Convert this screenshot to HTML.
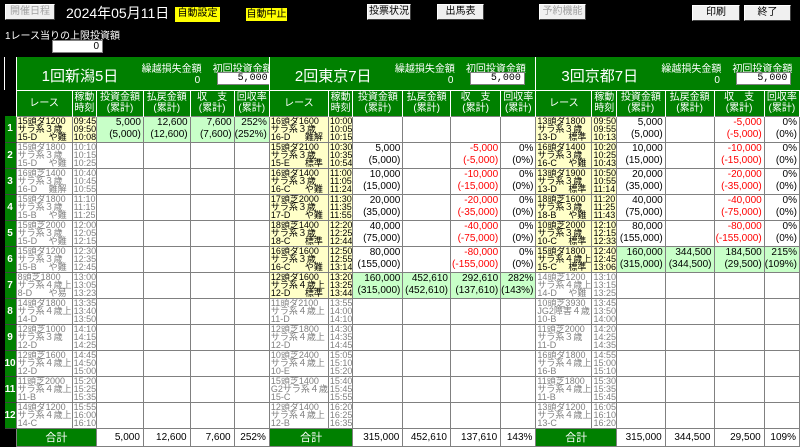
<!DOCTYPE html>
<html><head><meta charset="utf-8"><style>
*{box-sizing:border-box;margin:0;padding:0}
body{width:800px;height:446px;background:#000;position:relative;overflow:hidden;font-family:"Liberation Sans","Noto Sans CJK JP",sans-serif;color:#000}
.btn{position:absolute;height:16px;background:#f0f0f0;border:1px solid;border-color:#fff #404040 #404040 #fff;font-size:10px;line-height:14px;text-align:center}
.dis{color:#a0a0a0}
.yel{position:absolute;background:#ffff00;font-size:10px;line-height:14px;text-align:center;height:15px}
table{position:absolute;left:4px;top:57px;border-collapse:collapse;table-layout:fixed}
td,th{padding:0;overflow:hidden;white-space:nowrap}
tr.ttl{height:33px}tr.hd{height:26px}tr.d{height:26px}tr.tot{height:18px}
.gr{background:#008000;color:#fff;font-weight:normal}
.hd th{font-size:10px;line-height:11px;border:1px solid #fff;border-bottom:none}
.ttl th{position:relative;border-left:1px solid #fff}
.ttl .tn{position:absolute;left:25px;top:8px;font-size:15px}
.ttl .kl{position:absolute;left:125px;top:3px;font-size:10px}
.ttl .k0{position:absolute;left:178px;top:18px;font-size:10px}
.ttl .sl{position:absolute;left:196px;top:3px;font-size:10px}
.ttl .in{position:absolute;left:200px;top:15px;width:55px;height:13px;background:#fff;color:#000;border:1px solid #808080;font-size:10px;line-height:11px;text-align:right;padding-right:3px;font-family:"Liberation Mono",monospace}
th.n{background:#008000;color:#fff;font-size:10px;border-bottom:1px solid #404040}
th.nb{background:#000}
td{border:1px solid #808080;background:#fff;vertical-align:middle}
td.r{font-size:9px;line-height:8.3px;color:#808080;padding-left:1px}
td.r s{text-decoration:none;float:right;padding-right:5px}
td.t{font-size:9px;line-height:8.3px;color:#808080;padding-left:1px}
td.a{background:#ffffc8;color:#000}
td.m{font-size:10px;line-height:12px;text-align:right;padding-right:2px}
td.g{background:#c8ffc8}
td.rd{color:#f00}
.tot td{font-size:10px;text-align:right;padding-right:3px}
.tot th{border:1px solid #808080}
</style></head><body>
<div class="btn dis" style="left:5px;top:4px;width:50px">開催日程</div>
<div style="position:absolute;left:66px;top:3px;color:#fff;font-size:14px">2024年05月11日</div>
<div class="yel" style="left:175px;top:7px;width:45px">自動設定</div>
<div class="yel" style="left:245px;top:7px;width:43px;border:1px solid #000;line-height:13px">自動中止</div>
<div class="btn" style="left:367px;top:4px;width:44px">投票状況</div>
<div class="btn" style="left:437px;top:4px;width:47px">出馬表</div>
<div class="btn dis" style="left:539px;top:4px;width:47px">予約機能</div>
<div class="btn" style="left:692px;top:5px;width:48px">印刷</div>
<div class="btn" style="left:744px;top:5px;width:47px">終了</div>
<div style="position:absolute;left:5px;top:27px;color:#fff;font-size:10px">1レース当りの上限投資額</div>
<div style="position:absolute;left:52px;top:40px;width:51px;height:13px;background:#fff;border:1px solid #808080;font-size:10px;line-height:11px;text-align:right;padding-right:3px">0</div>

<table>
<colgroup><col style="width:11px">
<col style="width:52px"><col style="width:23px"><col style="width:51px"><col style="width:51px"><col style="width:51px"><col style="width:33px">
<col style="width:53px"><col style="width:21px"><col style="width:53px"><col style="width:49px"><col style="width:51px"><col style="width:33px">
<col style="width:52px"><col style="width:24px"><col style="width:51px"><col style="width:51px"><col style="width:51px"><col style="width:32px">
</colgroup>
<tr class="ttl"><th class="nb"></th>
<th colspan="6" class="gr"><span class="tn">1回新潟5日</span><span class="kl">繰越損失金額</span><span class="k0">0</span><span class="sl">初回投資金額</span><span class="in">5,000</span></th>
<th colspan="6" class="gr"><span class="tn">2回東京7日</span><span class="kl">繰越損失金額</span><span class="k0">0</span><span class="sl">初回投資金額</span><span class="in">5,000</span></th>
<th colspan="6" class="gr"><span class="tn">3回京都7日</span><span class="kl">繰越損失金額</span><span class="k0">0</span><span class="sl">初回投資金額</span><span class="in">5,000</span></th></tr>
<tr class="hd"><th class="nb" style="border:none"></th>
<th class="gr">レース</th><th class="gr">稼動<br>時刻</th><th class="gr">投資金額<br>(累計)</th><th class="gr">払戻金額<br>(累計)</th><th class="gr">収　支<br>(累計)</th><th class="gr">回収率<br>(累計)</th>
<th class="gr">レース</th><th class="gr">稼動<br>時刻</th><th class="gr">投資金額<br>(累計)</th><th class="gr">払戻金額<br>(累計)</th><th class="gr">収　支<br>(累計)</th><th class="gr">回収率<br>(累計)</th>
<th class="gr">レース</th><th class="gr">稼動<br>時刻</th><th class="gr">投資金額<br>(累計)</th><th class="gr">払戻金額<br>(累計)</th><th class="gr">収　支<br>(累計)</th><th class="gr">回収率<br>(累計)</th></tr>

<tr class="d"><th class="n">1</th>
<td class="r a">15頭ダ1200<br>サラ系３歳<br>15-D<s>や難</s></td><td class="t a">09:45<br>09:50<br>10:08</td><td class="m g">5,000<br>(5,000)</td><td class="m g">12,600<br>(12,600)</td><td class="m g">7,600<br>(7,600)</td><td class="m g">252%<br>(252%)</td>
<td class="r a">16頭ダ1600<br>サラ系３歳<br>16-D<s>難解</s></td><td class="t a">10:00<br>10:05<br>10:15</td><td></td><td></td><td></td><td></td>
<td class="r a">13頭ダ1800<br>サラ系３歳<br>13-D<s>標準</s></td><td class="t a">09:50<br>09:55<br>10:13</td><td class="m">5,000<br>(5,000)</td><td></td><td class="m rd">-5,000<br>(-5,000)</td><td class="m">0%<br>(0%)</td></tr>

<tr class="d"><th class="n">2</th>
<td class="r">15頭ダ1800<br>サラ系３歳<br>15-D<s>や難</s></td><td class="t">10:10<br>10:15<br>10:25</td><td></td><td></td><td></td><td></td>
<td class="r a">15頭ダ2100<br>サラ系３歳<br>15-E<s>標準</s></td><td class="t a">10:30<br>10:35<br>10:54</td><td class="m">5,000<br>(5,000)</td><td></td><td class="m rd">-5,000<br>(-5,000)</td><td class="m">0%<br>(0%)</td>
<td class="r a">16頭ダ1400<br>サラ系３歳<br>16-C<s>や難</s></td><td class="t a">10:20<br>10:25<br>10:43</td><td class="m">10,000<br>(15,000)</td><td></td><td class="m rd">-10,000<br>(-15,000)</td><td class="m">0%<br>(0%)</td></tr>

<tr class="d"><th class="n">3</th>
<td class="r">16頭芝1400<br>サラ系３歳<br>16-D<s>難解</s></td><td class="t">10:40<br>10:45<br>10:55</td><td></td><td></td><td></td><td></td>
<td class="r a">16頭ダ1400<br>サラ系３歳<br>16-C<s>や難</s></td><td class="t a">11:00<br>11:05<br>11:24</td><td class="m">10,000<br>(15,000)</td><td></td><td class="m rd">-10,000<br>(-15,000)</td><td class="m">0%<br>(0%)</td>
<td class="r a">13頭ダ1900<br>サラ系３歳<br>13-D<s>標準</s></td><td class="t a">10:50<br>10:55<br>11:14</td><td class="m">20,000<br>(35,000)</td><td></td><td class="m rd">-20,000<br>(-35,000)</td><td class="m">0%<br>(0%)</td></tr>

<tr class="d"><th class="n">4</th>
<td class="r">15頭ダ1800<br>サラ系３歳<br>15-B<s>や難</s></td><td class="t">11:10<br>11:15<br>11:25</td><td></td><td></td><td></td><td></td>
<td class="r a">17頭芝2000<br>サラ系３歳<br>17-D<s>や難</s></td><td class="t a">11:30<br>11:35<br>11:55</td><td class="m">20,000<br>(35,000)</td><td></td><td class="m rd">-20,000<br>(-35,000)</td><td class="m">0%<br>(0%)</td>
<td class="r a">18頭芝1600<br>サラ系３歳<br>18-B<s>や難</s></td><td class="t a">11:20<br>11:25<br>11:43</td><td class="m">40,000<br>(75,000)</td><td></td><td class="m rd">-40,000<br>(-75,000)</td><td class="m">0%<br>(0%)</td></tr>

<tr class="d"><th class="n">5</th>
<td class="r">15頭芝2000<br>サラ系３歳<br>15-D<s>や難</s></td><td class="t">12:00<br>12:05<br>12:15</td><td></td><td></td><td></td><td></td>
<td class="r a">18頭芝1400<br>サラ系３歳<br>18-C<s>標準</s></td><td class="t a">12:20<br>12:25<br>12:44</td><td class="m">40,000<br>(75,000)</td><td></td><td class="m rd">-40,000<br>(-75,000)</td><td class="m">0%<br>(0%)</td>
<td class="r a">10頭芝2000<br>サラ系３歳<br>10-C<s>標準</s></td><td class="t a">12:10<br>12:15<br>12:33</td><td class="m">80,000<br>(155,000)</td><td></td><td class="m rd">-80,000<br>(-155,000)</td><td class="m">0%<br>(0%)</td></tr>

<tr class="d"><th class="n">6</th>
<td class="r">15頭ダ1200<br>サラ系３歳<br>15-B<s>や難</s></td><td class="t">12:30<br>12:35<br>12:45</td><td></td><td></td><td></td><td></td>
<td class="r a">16頭ダ1600<br>サラ系３歳<br>16-C<s>や難</s></td><td class="t a">12:50<br>12:55<br>13:14</td><td class="m">80,000<br>(155,000)</td><td></td><td class="m rd">-80,000<br>(-155,000)</td><td class="m">0%<br>(0%)</td>
<td class="r a">15頭ダ1800<br>サラ系４歳上<br>15-C<s>標準</s></td><td class="t a">12:40<br>12:45<br>13:06</td><td class="m g">160,000<br>(315,000)</td><td class="m g">344,500<br>(344,500)</td><td class="m g">184,500<br>(29,500)</td><td class="m g">215%<br>(109%)</td></tr>

<tr class="d"><th class="n">7</th>
<td class="r">8頭芝1800<br>サラ系４歳上<br>8-D<s>や易</s></td><td class="t">13:00<br>13:05<br>13:23</td><td></td><td></td><td></td><td></td>
<td class="r a">12頭ダ1600<br>サラ系４歳上<br>12-D<s>標準</s></td><td class="t a">13:20<br>13:25<br>13:44</td><td class="m g">160,000<br>(315,000)</td><td class="m g">452,610<br>(452,610)</td><td class="m g">292,610<br>(137,610)</td><td class="m g">282%<br>(143%)</td>
<td class="r">14頭芝1200<br>サラ系４歳上<br>14-D<s>や難</s></td><td class="t">13:10<br>13:15<br>13:25</td><td></td><td></td><td></td><td></td></tr>

<tr class="d"><th class="n">8</th>
<td class="r">14頭ダ1800<br>サラ系４歳上<br>14-D</td><td class="t">13:35<br>13:40<br>13:50</td><td></td><td></td><td></td><td></td>
<td class="r">11頭ダ2100<br>サラ系４歳上<br>11-D</td><td class="t">13:55<br>14:00<br>14:10</td><td></td><td></td><td></td><td></td>
<td class="r">10頭芝3930<br>JG2障害４歳<br>10-B</td><td class="t">13:45<br>13:50<br>14:00</td><td></td><td></td><td></td><td></td></tr>

<tr class="d"><th class="n">9</th>
<td class="r">12頭芝1000<br>サラ系３歳<br>12-D</td><td class="t">14:10<br>14:15<br>14:25</td><td></td><td></td><td></td><td></td>
<td class="r">12頭芝1800<br>サラ系４歳上<br>12-D</td><td class="t">14:30<br>14:35<br>14:45</td><td></td><td></td><td></td><td></td>
<td class="r">11頭芝2000<br>サラ系３歳<br>11-D</td><td class="t">14:20<br>14:25<br>14:35</td><td></td><td></td><td></td><td></td></tr>

<tr class="d"><th class="n">10</th>
<td class="r">12頭芝1600<br>サラ系４歳上<br>12-D</td><td class="t">14:45<br>14:50<br>15:00</td><td></td><td></td><td></td><td></td>
<td class="r">10頭芝2400<br>サラ系４歳上<br>10-E</td><td class="t">15:05<br>15:10<br>15:20</td><td></td><td></td><td></td><td></td>
<td class="r">16頭ダ1800<br>サラ系４歳上<br>16-B</td><td class="t">14:55<br>15:00<br>15:10</td><td></td><td></td><td></td><td></td></tr>

<tr class="d"><th class="n">11</th>
<td class="r">11頭芝2000<br>サラ系４歳上<br>11-B</td><td class="t">15:20<br>15:25<br>15:35</td><td></td><td></td><td></td><td></td>
<td class="r">15頭芝1400<br>G2サラ系４歳<br>15-C</td><td class="t">15:40<br>15:45<br>15:55</td><td></td><td></td><td></td><td></td>
<td class="r">11頭芝1800<br>サラ系４歳上<br>11-B</td><td class="t">15:30<br>15:35<br>15:45</td><td></td><td></td><td></td><td></td></tr>

<tr class="d"><th class="n">12</th>
<td class="r">14頭ダ1200<br>サラ系４歳上<br>14-C</td><td class="t">15:55<br>16:00<br>16:10</td><td></td><td></td><td></td><td></td>
<td class="r">12頭ダ1400<br>サラ系４歳上<br>12-B</td><td class="t">16:20<br>16:25<br>16:35</td><td></td><td></td><td></td><td></td>
<td class="r">13頭ダ1200<br>サラ系４歳上<br>13-C</td><td class="t">16:05<br>16:10<br>16:20</td><td></td><td></td><td></td><td></td></tr>

<tr class="tot"><th class="nb" style="border:none"></th>
<th colspan="2" class="gr" style="font-size:11px">合計</th><td>5,000</td><td>12,600</td><td>7,600</td><td>252%</td>
<th colspan="2" class="gr" style="font-size:11px">合計</th><td>315,000</td><td>452,610</td><td>137,610</td><td>143%</td>
<th colspan="2" class="gr" style="font-size:11px">合計</th><td>315,000</td><td>344,500</td><td>29,500</td><td>109%</td></tr>
</table>
</body></html>
